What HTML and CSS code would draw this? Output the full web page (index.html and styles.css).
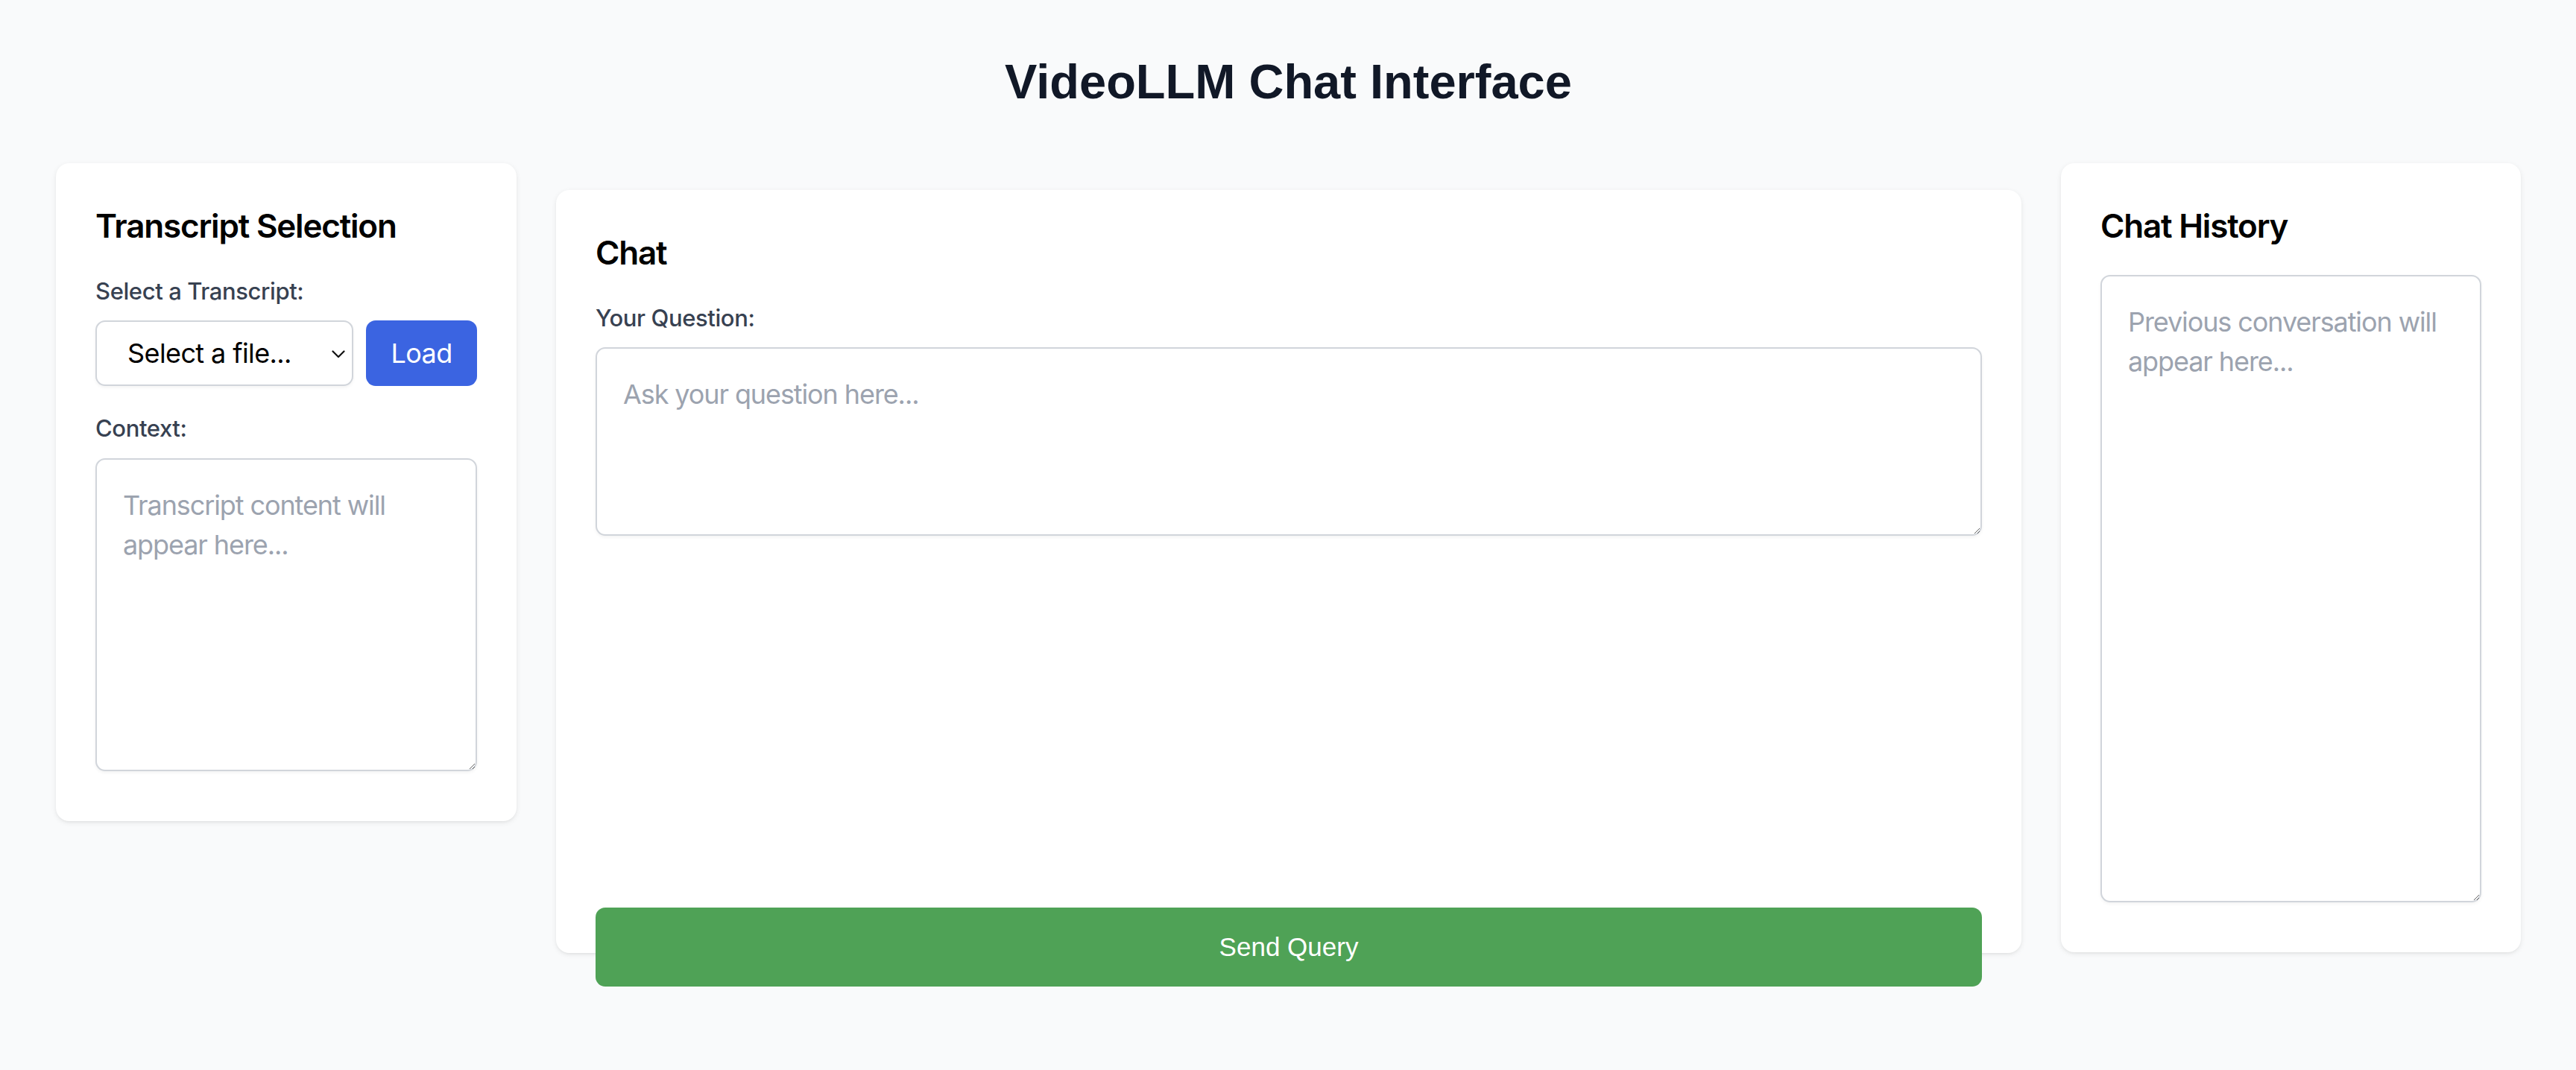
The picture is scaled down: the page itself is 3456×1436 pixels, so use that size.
FILE: index.html
```html
<!DOCTYPE html>
<html lang="en">
<head>
<meta charset="utf-8">
<title>VideoLLM Chat Interface</title>
<link rel="stylesheet" href="styles.css">
</head>
<body>
<div class="page">
  <h1 class="title">VideoLLM Chat Interface</h1>
  <div class="columns">
    <section class="card card-side">
      <h2 class="card-title">Transcript Selection</h2>
      <label class="field-label" for="file">Select a Transcript:</label>
      <div class="select-row">
        <div class="select-wrap">
          <select id="file" class="select">
            <option>Select a file...</option>
          </select>
          <svg class="chevron" viewBox="0 0 18 11" width="18" height="11" aria-hidden="true"><path d="M1.5 1.5 L9 9 L16.5 1.5" fill="none" stroke="#111" stroke-width="2.2" stroke-linecap="round" stroke-linejoin="round"/></svg>
        </div>
        <button class="btn-load">Load</button>
      </div>
      <label class="field-label label-gap" for="context">Context:</label>
      <textarea id="context" class="textarea ta-context" placeholder="Transcript content will appear here..."></textarea>
    </section>

    <section class="card card-chat">
      <h2 class="card-title">Chat</h2>
      <label class="field-label" for="question">Your Question:</label>
      <textarea id="question" class="textarea ta-question" placeholder="Ask your question here..."></textarea>
      <button class="btn-send">Send Query</button>
    </section>

    <section class="card card-side card-right">
      <h2 class="card-title">Chat History</h2>
      <textarea class="textarea ta-history" placeholder="Previous conversation will appear here..."></textarea>
    </section>
  </div>
</div>
</body>
</html>
```

FILE: styles.css
```css
* {
  box-sizing: border-box;
}

html, body {
  margin: 0;
  padding: 0;
}

body {
  background: #f9fafb;
  font-family: Inter, "Noto Sans", "Liberation Sans", sans-serif;
  color: #000;
}

.page {
  padding: 70px 74px 70px 75px;
}

.title {
  margin: 0 0 70px 0;
  text-align: center;
  font-family: "Liberation Sans", Arial, sans-serif;
  font-weight: 700;
  font-size: 65px;
  line-height: 79px;
  color: #111827;
}

.columns {
  display: flex;
  align-items: flex-start;
  gap: 53px;
}

.card {
  background: #ffffff;
  border-radius: 18px;
  padding: 53px;
  box-shadow: 0 2px 7px rgba(0, 0, 0, 0.08), 0 2px 4px -2px rgba(0, 0, 0, 0.08);
}

.card-side {
  width: 618px;
  flex: none;
}

.card-right {
  width: 617px;
}

.card-chat {
  flex: 1;
  margin-top: 36px;
  height: 1024px;
}

.card-title {
  margin: 0 0 35px 0;
  font-size: 44px;
  line-height: 62px;
  font-weight: 600;
  letter-spacing: -1.2px;
  color: #000;
}

.field-label {
  display: block;
  margin-bottom: 17px;
  font-size: 31px;
  line-height: 44px;
  font-weight: 500;
  letter-spacing: -0.4px;
  color: #374151;
}

.label-gap {
  margin-top: 35px;
}

.select-row {
  display: flex;
  gap: 17px;
}

.select-wrap {
  position: relative;
  flex: 1;
}

.select {
  display: block;
  width: 100%;
  height: 88px;
  appearance: none;
  -webkit-appearance: none;
  background: #fff;
  border: 2px solid #d1d5db;
  border-radius: 13px;
  box-shadow: 0 2px 4px rgba(0, 0, 0, 0.05);
  padding: 0 40px 0 41px;
  font-family: Inter, "Noto Sans", sans-serif;
  font-size: 36px;
  letter-spacing: -0.6px;
  color: #000;
}

.chevron {
  position: absolute;
  right: 11px;
  top: 40px;
  width: 18px;
  height: 11px;
  pointer-events: none;
}

.btn-load {
  flex: none;
  width: 149px;
  height: 88px;
  border: none;
  border-radius: 13px;
  background: #3b64e1;
  color: #fff;
  font-family: Inter, "Noto Sans", sans-serif;
  font-size: 36px;
  letter-spacing: -0.6px;
  padding: 0;
}

.textarea {
  display: block;
  width: 100%;
  background: #fff;
  border: 2px solid #d1d5db;
  border-radius: 13px;
  box-shadow: 0 2px 4px rgba(0, 0, 0, 0.05);
  padding: 35px;
  font-family: Inter, "Noto Sans", sans-serif;
  font-size: 36px;
  line-height: 53px;
  letter-spacing: -1.1px;
  color: #111827;
  resize: vertical;
}

.textarea::placeholder {
  color: #9ca3af;
}

.ta-context {
  height: 420px;
  margin-top: 18px;
  margin-bottom: 14px;
}

.ta-question {
  height: 253px;
}

.ta-history {
  height: 842px;
  margin-bottom: 14px;
}

.btn-send {
  display: block;
  width: 100%;
  height: 106px;
  margin-top: 499px;
  border: none;
  border-radius: 13px;
  background: #4fa256;
  color: #fff;
  font-family: "Liberation Sans", Arial, sans-serif;
  font-size: 35px;
}
```
